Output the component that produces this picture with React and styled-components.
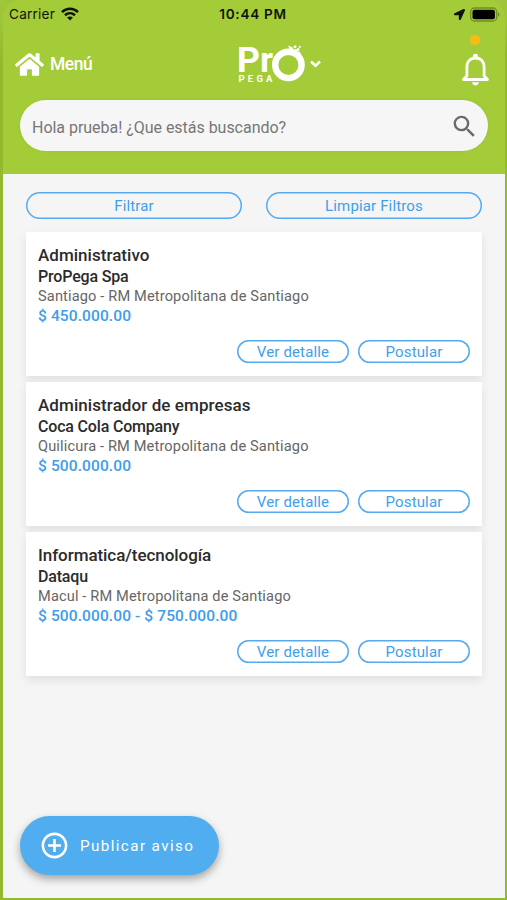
import React from "react"
import styled, { createGlobalStyle } from "styled-components"
import { FaHome, FaLocationArrow } from "react-icons/fa"
import { MdSearch, MdAddCircleOutline } from "react-icons/md"

const GlobalStyle = createGlobalStyle`
    * {
        box-sizing: border-box;
    }

    body {
        margin: 0;
        background: #9bc236;
        font-family: Roboto, "Liberation Sans", sans-serif;
    }

    button {
        font-family: inherit;
        padding: 0;
        margin: 0;
        cursor: pointer;
    }

    svg {
        display: block;
    }
`

const Screen = styled.div`
    position: relative;
    width: 507px;
    height: 900px;
    padding: 0 2px 2px 3px;
    display: flex;
    flex-direction: column;
    background: linear-gradient(#9fc63a, #9fc63a 20px, #93b92e 60px);
`

const Header = styled.header`
    height: 174px;
    flex: none;
    border-radius: 18px 18px 0 0;
    background: #a4cc39;
`

const StatusBar = styled.div`
    height: 28px;
    padding: 0 5px 0 6px;
    display: grid;
    grid-template-columns: 1fr auto 1fr;
    align-items: center;
    font-family: Inter, "Liberation Sans", sans-serif;
    font-size: 13.6px;
    color: #101408;
`

const Carrier = styled.div`
    display: flex;
    align-items: center;
    gap: 6px;
    letter-spacing: 0.2px;
`

const Clock = styled.div`
    font-weight: 600;
    letter-spacing: 0.7px;
    margin-right: 3px;
`

const Power = styled.div`
    display: flex;
    align-items: center;
    justify-content: flex-end;
    gap: 5px;
`

const NavBar = styled.nav`
    height: 72px;
    padding: 0 16px 0 12px;
    display: grid;
    grid-template-columns: 1fr auto 1fr;
    align-items: center;
    color: white;
`

const MenuLink = styled.div`
    display: flex;
    align-items: center;
    gap: 6px;
    font-size: 17.5px;
    font-weight: 500;
    letter-spacing: -0.5px;
`

const Brand = styled.div`
    display: flex;
    align-items: center;
    gap: 4px;
    padding-left: 54px;
`

const Bell = styled.div`
    position: relative;
    justify-self: end;
    margin-top: 10px;
`

const BellDot = styled.span`
    position: absolute;
    top: -18px;
    left: 8px;
    width: 10px;
    height: 10px;
    border-radius: 50%;
    background: #fbbc12;
`

const SearchBox = styled.div`
    height: 51px;
    margin: 0 17px;
    padding: 3px 9px 0 12px;
    border-radius: 26px;
    display: flex;
    align-items: center;
    justify-content: space-between;
    background: #f6f6f6;
    box-shadow: 0 0 3px rgba(80, 110, 10, 0.15);
    color: #777;
    font-size: 16px;
    letter-spacing: -0.03px;

    svg {
        margin-top: -2px;
    }
`

const Content = styled.main`
    flex: 1;
    padding: 18px 23px 0;
    background: #f5f5f5;
`

const Filters = styled.div`
    display: flex;
    gap: 24px;
    margin-bottom: 13px;
`

const OutlineButton = styled.button`
    flex: ${({ $small }) => ($small ? "none" : 1)};
    width: ${({ $small }) => ($small ? "112px" : "auto")};
    height: ${({ $small }) => ($small ? "23px" : "27px")};
    padding-top: 2px;
    border: none;
    border-radius: 14px;
    background: transparent;
    box-shadow: inset 0 0 0 1.5px #55aaf0;
    color: #3f9fec;
    font-size: 15px;
    line-height: 1;
    letter-spacing: 0.15px;
`

const JobList = styled.div`
    display: flex;
    flex-direction: column;
    gap: 6px;
`

const Card = styled.article`
    height: 144px;
    padding: 12px 12px 13px;
    display: flex;
    flex-direction: column;
    background: white;
    box-shadow: 0 4px 9px rgba(0, 0, 0, 0.09);
`

const JobTitle = styled.h2`
    margin: 0;
    font-size: 17px;
    line-height: 22px;
    font-weight: 500;
    letter-spacing: ${({ $spacing }) => $spacing}px;
    color: #2b2b2b;
`

const Company = styled.h3`
    margin: 0;
    font-size: 16px;
    line-height: 21px;
    font-weight: 500;
    letter-spacing: -0.18px;
    color: #2b2b2b;
`

const Place = styled.p`
    margin: 0;
    font-size: 14.6px;
    line-height: 19px;
    letter-spacing: 0.14px;
    color: #666;
`

const Salary = styled.p`
    margin: 0;
    font-size: 15.5px;
    line-height: 20px;
    font-weight: 500;
    letter-spacing: 0.11px;
    color: #3d9dec;
`

const Actions = styled.div`
    margin-top: auto;
    display: flex;
    justify-content: flex-end;
    gap: 9px;
`

const PublishButton = styled.button`
    position: absolute;
    left: 20px;
    bottom: 25px;
    width: 199px;
    height: 59px;
    padding-left: 19px;
    border: none;
    border-radius: 30px;
    display: flex;
    align-items: center;
    gap: 10px;
    background: #4fadf0;
    box-shadow: 0 4px 8px rgba(0, 0, 0, 0.34);
    color: white;
    font-size: 15.2px;
    letter-spacing: 1.4px;
`

const WifiIcon = () => (
    <svg width="18" height="14" viewBox="0 0 18 14" fill="none" stroke="#101408" strokeWidth="2.6">
        <path d="M1 5.1C5.6.7 12.4.7 17 5.1" />
        <path d="M4 8.2c2.9-2.7 7.1-2.7 10 0" />
        <path d="M9 13.5 6.1 10.6c1.7-1.5 4.1-1.5 5.8 0z" fill="#101408" stroke="none" />
    </svg>
)

const BatteryIcon = () => (
    <svg width="30" height="15" viewBox="0 0 30 15">
        <rect x="0.7" y="1" width="26" height="13" rx="3.8" fill="none" stroke="#6f8e22" strokeWidth="1.3" />
        <rect x="2.5" y="2.8" width="22.4" height="9.4" rx="2" fill="#000" />
        <path d="M28 5.3c2 .8 2 3.6 0 4.4z" fill="#6f8e22" />
    </svg>
)

const Logo = () => (
    <svg width="69" height="40" viewBox="0 0 69 40" fill="white" overflow="visible">
        <text x="0" y="27.5" fontSize="35" fontWeight="700" textLength="36" lengthAdjust="spacingAndGlyphs">Pr</text>
        <text x="1.5" y="37.6" fontSize="9.5" fontWeight="700" textLength="34" lengthAdjust="spacing">PEGA</text>
        <circle cx="51.4" cy="20.9" r="13.2" fill="none" stroke="white" strokeWidth="6.4" />
        <path d="M51 7.5 52.5 4 50.5 1.6 55 3l3.5 5.5z" />
        <circle cx="58" cy="2.8" r="1.5" />
        <circle cx="61" cy="5.6" r="1.5" />
        <circle cx="58.5" cy="7" r="1.8" />
        <circle cx="61.8" cy="9.3" r="1.7" />
        <circle cx="62.8" cy="2.8" r="1.1" />
    </svg>
)

const ChevronIcon = () => (
    <svg width="11" height="8" viewBox="0 0 11 8" fill="none" stroke="white" strokeWidth="2.6">
        <path d="m1 1.5 4.5 4.3L10 1.5" />
    </svg>
)

const BellIcon = () => (
    <svg width="27" height="33" viewBox="0 0 27 33">
        <path
            d="M1.5 26.5h24l-3.4-3.6V14c0-5.4-3.2-9-8.6-9s-8.6 3.6-8.6 9v8.9z"
            fill="none"
            stroke="white"
            strokeWidth="2.8"
            strokeLinejoin="round"
        />
        <circle cx="13.5" cy="3.4" r="2.6" fill="white" />
        <path d="M10 29.2h7c-.4 1.9-1.6 3.1-3.5 3.1s-3.1-1.2-3.5-3.1z" fill="white" />
    </svg>
)

const jobs = [
    {
        title: "Administrativo",
        titleSpacing: 0.03,
        company: "ProPega Spa",
        place: "Santiago - RM Metropolitana de Santiago",
        salary: "$ 450.000.00",
    },
    {
        title: "Administrador de empresas",
        titleSpacing: 0.08,
        company: "Coca Cola Company",
        place: "Quilicura - RM Metropolitana de Santiago",
        salary: "$ 500.000.00",
    },
    {
        title: "Informatica/tecnología",
        titleSpacing: -0.06,
        company: "Dataqu",
        place: "Macul - RM Metropolitana de Santiago",
        salary: "$ 500.000.00 - $ 750.000.00",
    },
]

const JobCard = ({ job }) => (
    <Card>
        <JobTitle $spacing={job.titleSpacing}>{job.title}</JobTitle>
        <Company>{job.company}</Company>
        <Place>{job.place}</Place>
        <Salary>{job.salary}</Salary>
        <Actions>
            <OutlineButton $small>Ver detalle</OutlineButton>
            <OutlineButton $small>Postular</OutlineButton>
        </Actions>
    </Card>
)

const App = () => {
    return (
        <>
            <GlobalStyle />
            <Screen>
                <Header>
                    <StatusBar>
                        <Carrier>
                            <span>Carrier</span>
                            <WifiIcon />
                        </Carrier>
                        <Clock>10:44 PM</Clock>
                        <Power>
                            <FaLocationArrow size={11} color="#101408" />
                            <BatteryIcon />
                        </Power>
                    </StatusBar>
                    <NavBar>
                        <MenuLink>
                            <FaHome size={29} />
                            <span>Menú</span>
                        </MenuLink>
                        <Brand>
                            <Logo />
                            <ChevronIcon />
                        </Brand>
                        <Bell>
                            <BellDot />
                            <BellIcon />
                        </Bell>
                    </NavBar>
                    <SearchBox>
                        <span>Hola prueba! ¿Que estás buscando?</span>
                        <MdSearch size={29} color="#6b6b6b" />
                    </SearchBox>
                </Header>
                <Content>
                    <Filters>
                        <OutlineButton>Filtrar</OutlineButton>
                        <OutlineButton>Limpiar Filtros</OutlineButton>
                    </Filters>
                    <JobList>
                        {jobs.map((job) => (
                            <JobCard key={job.title} job={job} />
                        ))}
                    </JobList>
                </Content>
                <PublishButton>
                    <MdAddCircleOutline size={31} />
                    <span>Publicar aviso</span>
                </PublishButton>
            </Screen>
        </>
    )
}

export default App
